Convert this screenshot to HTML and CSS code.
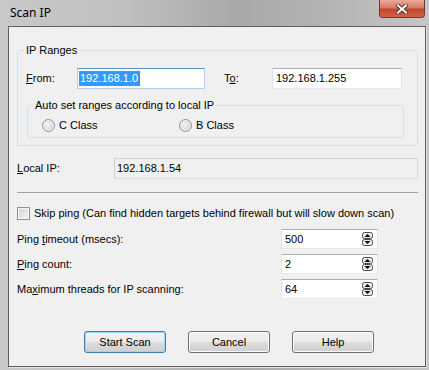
FILE: index.html
```html
<!DOCTYPE html>
<html lang="en">
<head>
  <meta charset="UTF-8" />
  <title>Scan IP</title>
  <link rel="stylesheet" href="styles.css">
</head>
<body>

<div class="window">
  <div class="titlebar">
    <span class="title">Scan IP</span>
    <div class="close">
      <svg width="12" height="10" viewBox="0 0 12 10">
        <path d="M2 1.5 L10 8.5 M10 1.5 L2 8.5" stroke="#4b3a36" stroke-width="4" stroke-linecap="square" fill="none"/>
        <path d="M2 1.5 L10 8.5 M10 1.5 L2 8.5" stroke="#ffffff" stroke-width="2" stroke-linecap="square" fill="none"/>
      </svg>
    </div>
  </div>

  <div class="client">
    <fieldset class="group ranges">
      <legend>IP Ranges</legend>
      <div class="range-row">
        <label class="lbl-from"><u>F</u>rom:</label>
        <div class="edit edit-from focused"><span class="sel">192.168.1.0</span><span class="caret"></span></div>
        <label class="lbl-to">T<u>o</u>:</label>
        <div class="edit edit-to">192.168.1.255</div>
      </div>
      <fieldset class="group auto">
        <legend>Auto set ranges according to local IP</legend>
        <div class="radio-row">
          <label class="radio radio-c"><span class="dot"></span>C Class</label>
          <label class="radio"><span class="dot"></span>B Class</label>
        </div>
      </fieldset>
    </fieldset>

    <div class="local-row">
      <label class="lbl-local"><u>L</u>ocal IP:</label>
      <div class="edit readonly">192.168.1.54</div>
    </div>

    <div class="separator"></div>

    <label class="check-row"><span class="box"></span>Skip ping (Can find hidden targets behind firewall but will slow down scan)</label>

    <div class="spin-list">
      <div class="spin-row">
        <label>Ping <u>t</u>imeout (msecs):</label>
        <div class="edit spin"><span>500</span>
          <svg class="arrows" width="11" height="14" viewBox="0 0 11 14">
            <rect x="0.5" y="0.5" width="10" height="6" rx="2" fill="#ececec" stroke="#4a4a4a"/>
            <path d="M2.5 5 L5.5 2 L8.5 5 Z" fill="#000"/>
            <rect x="0.5" y="7.5" width="10" height="6" rx="2" fill="#ececec" stroke="#4a4a4a"/>
            <path d="M2.5 9 L5.5 12 L8.5 9 Z" fill="#000"/>
          </svg>
        </div>
      </div>
      <div class="spin-row">
        <label><u>P</u>ing count:</label>
        <div class="edit spin"><span>2</span>
          <svg class="arrows" width="11" height="14" viewBox="0 0 11 14">
            <rect x="0.5" y="0.5" width="10" height="6" rx="2" fill="#ececec" stroke="#4a4a4a"/>
            <path d="M2.5 5 L5.5 2 L8.5 5 Z" fill="#000"/>
            <rect x="0.5" y="7.5" width="10" height="6" rx="2" fill="#ececec" stroke="#4a4a4a"/>
            <path d="M2.5 9 L5.5 12 L8.5 9 Z" fill="#000"/>
          </svg>
        </div>
      </div>
      <div class="spin-row">
        <label>Ma<u>x</u>imum threads for IP scanning:</label>
        <div class="edit spin"><span>64</span>
          <svg class="arrows" width="11" height="14" viewBox="0 0 11 14">
            <rect x="0.5" y="0.5" width="10" height="6" rx="2" fill="#ececec" stroke="#4a4a4a"/>
            <path d="M2.5 5 L5.5 2 L8.5 5 Z" fill="#000"/>
            <rect x="0.5" y="7.5" width="10" height="6" rx="2" fill="#ececec" stroke="#4a4a4a"/>
            <path d="M2.5 9 L5.5 12 L8.5 9 Z" fill="#000"/>
          </svg>
        </div>
      </div>
    </div>

    <div class="buttons">
      <button class="btn default">Start Scan</button>
      <button class="btn">Cancel</button>
      <button class="btn">Help</button>
    </div>
  </div>
</div>

</body>
</html>
```

FILE: styles.css
```css
body {
  margin: 0;
  font-family: 'Liberation Sans', Arial, sans-serif;
  font-size: 11px;
  line-height: 13px;
  color: #000;
  background: #fff;
}
.window {
  width: 429px;
  height: 370px;
  display: flex;
  flex-direction: column;
  background: linear-gradient(90deg, #c9c9c9 0%, #bfbfbf 30%, #a9a9a9 55%, #b3b3b3 75%, #c6c6c6 100%);
}
.titlebar {
  height: 26px;
  display: flex;
  justify-content: space-between;
  padding: 0 4px 0 10px;
  flex-shrink: 0;
}
.title {
  font-family: 'Noto Sans', sans-serif;
  font-size: 12px;
  line-height: 26px;
  color: #000;
}
.close {
  width: 44px;
  height: 17px;
  border: 1px solid #6e3a30;
  border-top: none;
  border-radius: 0 0 4px 4px;
  background: linear-gradient(#eba999 0%, #d97a63 45%, #c3452c 55%, #cf6448 100%);
  display: flex;
  align-items: center;
  justify-content: center;
}
.client {
  flex: 1;
  margin: 0 3px 3px 8px;
  border: 1px solid #5e5e5e;
  box-shadow: 1px 1px 0 #e2e2e2;
  background: #f0f0f0;
  padding: 0 7px 0 8px;
  display: flex;
  flex-direction: column;
}
fieldset.group {
  margin: 0;
  padding: 0;
  min-width: 0;
  border: 1px solid #d5dfe5;
  border-radius: 3px;
}
fieldset.group legend {
  padding: 0 2px;
  line-height: 13px;
}
.ranges {
  margin-top: 17px !important;
}
.ranges > legend {
  margin-left: 6px;
}
.range-row {
  display: flex;
  align-items: center;
  padding: 11px 13px 0 8px;
}
.lbl-from {
  width: 51px;
}
.lbl-to {
  width: 48px;
  margin-left: 19px;
}
.edit {
  box-sizing: border-box;
  height: 21px;
  border: 1px solid;
  border-color: #abadb3 #dbdfe6 #e3e9ef #e2e3ea;
  background: #fff;
  padding-left: 3px;
  line-height: 19px;
  white-space: nowrap;
}
.edit-from {
  width: 128px;
  padding-left: 1px;
  display: flex;
  align-items: center;
}
.edit-from.focused {
  border-color: #5c93bc #b5cfe7 #b5cfe7 #b5cfe7;
}
.edit-to {
  width: 130px;
}
.sel {
  background: #3399ff;
  color: #fff;
  line-height: 15px;
  padding: 0 1px;
}
.caret {
  width: 1px;
  height: 15px;
  background: #c8640f;
}
.auto {
  margin: 10px 13px 7px 9px !important;
}
.auto > legend {
  margin-left: 5px;
}
.radio-row {
  display: flex;
  align-items: center;
  padding: 7px 0 5px 14px;
  height: 13px;
}
.radio {
  display: flex;
  align-items: center;
  gap: 4px;
}
.radio-c {
  width: 137px;
}
.dot {
  box-sizing: border-box;
  width: 13px;
  height: 13px;
  border-radius: 50%;
  border: 1px solid #8e8f8f;
  background: radial-gradient(circle at 40% 40%, #f6f6f6 0%, #dcdcdc 55%, #c4c4c4 100%);
  box-shadow: inset 0 0 0 1px #f3f3f3;
}
.local-row {
  display: flex;
  align-items: center;
  margin-top: 12px;
}
.lbl-local {
  width: 97px;
}
.edit.readonly {
  flex: 1;
  background: transparent;
  border-color: #d0d0d0 #dcdcdc #dcdcdc #d0d0d0;
  padding-left: 2px;
}
.separator {
  margin-top: 13px;
  height: 1px;
  background: #a0a0a0;
}
.check-row {
  display: flex;
  align-items: center;
  gap: 4px;
  margin-top: 14px;
  height: 13px;
}
.box {
  box-sizing: border-box;
  width: 13px;
  height: 13px;
  border: 1px solid #8e8f8f;
  background: linear-gradient(135deg, #d2d2d2, #f6f6f6);
  box-shadow: inset 0 0 0 1px #f8f8f8;
}
.spin-list {
  margin-top: 9px;
  display: flex;
  flex-direction: column;
  gap: 5px;
}
.spin-row {
  display: grid;
  grid-template-columns: 264px 97px;
  align-items: center;
}
.edit.spin {
  height: 20px;
  line-height: 18px;
  display: flex;
  justify-content: space-between;
  align-items: center;
  padding-right: 4px;
}
.buttons {
  display: flex;
  gap: 22px;
  margin-top: 32px;
  padding-left: 67px;
}
.btn {
  width: 82px;
  height: 22px;
  font-family: 'Liberation Sans', Arial, sans-serif;
  font-size: 11px;
  color: #000;
  border: 1px solid #707070;
  border-radius: 3px;
  background: linear-gradient(#f2f2f2 0%, #ebebeb 50%, #dddddd 51%, #cfcfcf 100%);
  box-shadow: inset 0 0 0 1px #fcfcfc;
  padding: 0;
}
.btn.default {
  border-color: #3c7fb1;
  box-shadow: inset 0 0 0 1px #9fd7f3;
}
```
